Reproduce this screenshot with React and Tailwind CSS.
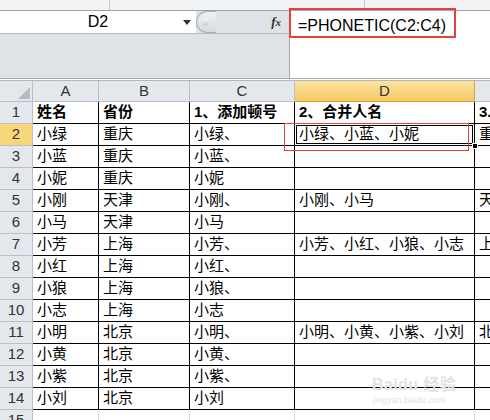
import React from 'react';

const cjk = { fontFamily: '"Liberation Sans", "Noto Sans CJK SC", sans-serif' };

// column widths: A, B, C, D, E (E is clipped by the window)
const cols = ['w-[66px]', 'w-[91px]', 'w-[105px]', 'w-[180px]', 'w-[60px]'];

const rows = [
  ['姓名', '省份', '1、添加顿号', '2、合并人名', '3.'],
  ['小绿', '重庆', '小绿、', '小绿、小蓝、小妮', '重'],
  ['小蓝', '重庆', '小蓝、', '', ''],
  ['小妮', '重庆', '小妮', '', ''],
  ['小刚', '天津', '小刚、', '小刚、小马', '天'],
  ['小马', '天津', '小马', '', ''],
  ['小芳', '上海', '小芳、', '小芳、小红、小狼、小志', '上'],
  ['小红', '上海', '小红、', '', ''],
  ['小狼', '上海', '小狼、', '', ''],
  ['小志', '上海', '小志', '', ''],
  ['小明', '北京', '小明、', '小明、小黄、小紫、小刘', '北'],
  ['小黄', '北京', '小黄、', '', ''],
  ['小紫', '北京', '小紫、', '', ''],
  ['小刘', '北京', '小刘', '', ''],
];

function RowHeader({ n, active }) {
  return (
    <div
      className={`w-[33px] shrink-0 h-full flex items-center justify-center text-[15px] text-[#333] border-r border-b border-[#b9bec7] ${
        active ? 'bg-[#f8d77c]' : 'bg-[#e4e7ec]'
      }`}
    >
      {n}
    </div>
  );
}

export default function App() {
  return (
    <div className="relative w-[490px] h-[420px] overflow-hidden bg-white select-none" style={cjk}>
      {/* ribbon remains */}
      <div className="h-[11px] bg-[#f2f3f5] border-b border-[#9ea3ab] flex">
        <div className="w-[110px] border-r border-[#c3c7cd]" />
        <div className="w-[255px] border-r border-[#c3c7cd]" />
      </div>

      {/* formula bar */}
      <div className="flex h-[68px] border-b border-[#a7acb4]">
        <div className="w-[289px] flex flex-col bg-[#dfe2e7]">
          <div className="h-[23px] flex border-b border-[#b6bbc2]">
            <div className="w-[196px] bg-white relative flex items-center justify-center text-[16px] text-black">
              D2
              <span className="absolute right-[5px] top-[9px] w-0 h-0 border-l-[4px] border-r-[4px] border-t-[5px] border-l-transparent border-r-transparent border-t-[#333]" />
            </div>
            <div className="flex-1 flex items-center">
              <div className="h-[22px] w-[20px] rounded-l-full border border-r-0 border-[#a9aeb6] bg-gradient-to-b from-[#eef0f3] to-[#d6d9de] flex items-center pl-[4px]">
                <div className="w-[8px] h-[8px] rounded-full bg-gradient-to-b from-[#f7f7f7] to-[#c8cbd0]" />
              </div>
              <div className="flex-1" />
              <span className="italic font-bold text-[13px] text-[#333] pr-[8px]" style={{ fontFamily: '"Liberation Serif", serif' }}>
                f<span className="text-[11px]">x</span>
              </span>
            </div>
          </div>
        </div>
        <div className="flex-1 bg-white border-l border-[#a7acb4] pl-[8px] pt-[3px] text-[16px] text-black">
          =PHONETIC(C2:C4)
        </div>
      </div>
      <div className="h-[2px] bg-white border-b border-[#b3b8bf]" />

      {/* column header */}
      <div className="flex h-[21px] bg-[#e4e7ec] text-[15px] text-[#333]">
        <div className="w-[33px] shrink-0 relative border-r border-b border-[#b9bec7]">
          <svg className="absolute right-[2px] bottom-[2px]" width="12" height="12" viewBox="0 0 12 12">
            <path d="M12 0 L12 12 L0 12 Z" fill="#b7bcc4" />
          </svg>
        </div>
        {['A', 'B', 'C', 'D', 'E'].map((c, i) => (
          <div
            key={c}
            className={`${cols[i]} shrink-0 flex items-center justify-center border-r border-b ${
              c === 'D'
                ? 'bg-gradient-to-b from-[#fbe3a1] to-[#f4c860] border-r-[#d9a63f] border-b-[#e0a43a]'
                : 'border-[#b9bec7]'
            }`}
          >
            {c === 'E' ? '' : c}
          </div>
        ))}
      </div>

      {/* data rows */}
      {rows.map((r, ri) => (
        <div key={ri} className="flex h-[22px]">
          <RowHeader n={ri + 1} active={ri === 1} />
          {r.map((v, ci) => (
            <div
              key={ci}
              className={`${cols[ci]} shrink-0 relative flex items-center pl-[4px] text-[15px] text-black border-r border-b border-black whitespace-nowrap overflow-hidden ${
                ri === 0 ? 'font-bold' : ''
              }`}
            >
              {v}
              {ri === 1 && ci === 3 && (
                <span className="absolute -left-px -top-px right-[-1px] bottom-[-1px] border-[3px] border-double border-black" />
              )}
            </div>
          ))}
        </div>
      ))}

      {/* row 15 */}
      <div className="flex h-[22px]">
        <RowHeader n={15} />
        {cols.map((w, i) => (
          <div key={i} className={`${w} shrink-0 border-r border-b border-[#d6d9de]`} />
        ))}
      </div>

      {/* fill handle */}
      <span className="absolute left-[472px] top-[143px] w-[6px] h-[6px] bg-black border border-white" />

      {/* red annotation boxes */}
      <div className="absolute left-[289px] top-[8px] w-[167px] h-[30px] border-2 border-[#e8403c]" />
      <div className="absolute left-[284px] top-[123px] w-[185px] h-[28px] border-[1.5px] border-[#e8403c]" />

      {/* watermark */}
      <div className="absolute left-[372px] top-[377px] text-[#e2e2e2] leading-none pointer-events-none">
        <div className="text-[16px] font-bold tracking-wide">Baidu 经验</div>
        <div className="text-[9px] mt-[3px] ml-[1px]">jingyan.baidu.com</div>
      </div>
    </div>
  );
}
